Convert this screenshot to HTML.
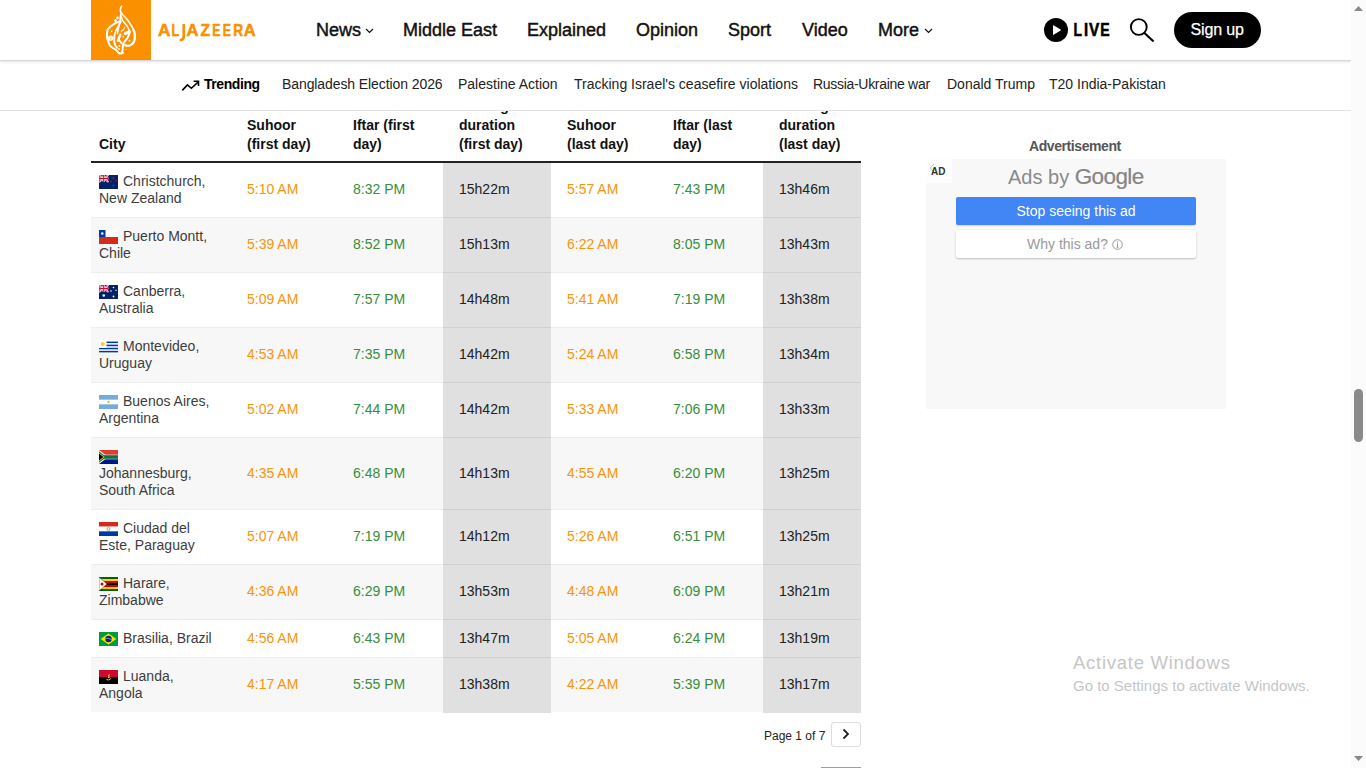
<!DOCTYPE html>
<html><head><meta charset="utf-8">
<style>
*{margin:0;padding:0;box-sizing:border-box}
html,body{width:1366px;height:768px;overflow:hidden;background:#fff;font-family:"Liberation Sans",sans-serif;color:#000}
.a{position:absolute;white-space:nowrap}
#hdr{position:absolute;left:0;top:0;width:1351px;height:61px;background:#fff;border-bottom:1px solid #d6d6d6;box-shadow:0 1px 3px rgba(0,0,0,.12);z-index:20}
#logo{position:absolute;left:91px;top:0;width:60px;height:60px;background:#fa9000}
.brand{left:158px;top:20px;font-size:16.5px;line-height:20px;font-weight:bold;color:#fa9000;letter-spacing:0.2px}
.nav{top:19px;font-size:18px;line-height:22px;font-weight:normal;color:#111;-webkit-text-stroke:0.45px #111}
#trend{position:absolute;left:0;top:61px;width:1351px;height:50px;background:#fff;border-bottom:1px solid #e3e3e3;z-index:10}
.tr{top:15px;font-size:14px;line-height:17px;color:#222}
#sb{position:absolute;left:1351px;top:0;width:15px;height:768px;background:#fbfbfb;z-index:30}
.th{font-size:14px;line-height:19px;font-weight:bold;color:#111}
.td{font-size:14px;line-height:17px;color:#222}
.city{color:#3d3d3d}
.or{color:#f9940b}
.gr{color:#388e3c}
.du{color:#222}
</style></head><body>
<div id="hdr">
  <div id="logo">
    <svg width="60" height="60" viewBox="0 0 60 60" style="position:absolute;left:0;top:0">
      <g fill="none" stroke="#fff" stroke-linecap="round" stroke-linejoin="round">
        <path d="M30.6 6.4 C29 8 28.9 11.5 30.3 13.1 C32 15 35 18 36.7 20.3 C39 23.5 41.5 27 42.5 30" stroke-width="1.62"/>
        <path d="M42.5 30 C44 33 44.3 37 43.3 40.8 C42.3 43.5 39.5 45.6 36.7 45.9 C35.5 46 34.5 45.6 34.1 45.1" stroke-width="2.34"/>
        <path d="M29.6 14.5 C30.3 17 31 19 31.3 19.9 C32.5 22 34 23.5 34.7 24.3 C36 26 37 27.5 37.4 28.4 C38.2 30 38.5 31.5 38.5 32.7" stroke-width="1.43"/>
        <path d="M38.5 32.7 C38 35 37 37 36.3 38.2 C35 40 34 41 33.4 41.9 C32.5 43 32 44 32 44.4 C31.8 46 31.7 48 31.6 49.9 C31.4 51.5 31 52.5 30.5 53.2" stroke-width="1.95"/>
        <path d="M27.9 21.6 C25.5 22.5 24 23.5 22.5 24.3 C20 25.8 18.5 27.2 17.4 28.7 C16.6 29.8 16.2 30.8 16.3 31.6 C15.9 33 15.8 34 15.9 35.3 C16 38 16.5 40 17.4 41.9 C18 43.5 18.5 45 19.2 45.9 C20.2 47 21.3 47.8 22.5 48.4 C23.5 48.9 24.3 49.3 25 49.9 C26 50.8 26.8 51.8 27.6 52.8 C28.5 53.4 29.3 53.6 30.1 53.5 C31 53.4 31.5 53.2 32 52.8" stroke-width="2.08"/>
        <path d="M29.6 15.2 C29.4 19 28.8 23 28 26 C27 30 26.6 32 26.5 33.5" stroke-width="1.56"/>
        <path d="M29.9 21 C28.5 25 25.5 29 24.4 32 C23.5 34 23.2 36.5 23.2 39 C23.2 41 23.5 43 23.9 44.4 C24.5 46 25.3 47 26.1 47.7" stroke-width="1.82"/>
        <path d="M29.4 34.6 C28.5 37 27.5 39 26.9 40.8" stroke-width="2.34"/>
        <path d="M28.3 40.4 L30.5 43.3" stroke-width="1.82"/>
        <path d="M34.1 33.6 C35.5 33 37 32.3 38.5 31.6" stroke-width="2.86"/>
        <path d="M20.4 31.8 L21 30.8 M30.3 31.4 L33.2 29.2 M33 28.2 L33.8 27.2" stroke-width="1.04"/>
      </g>
      <circle cx="19.6" cy="38.2" r="1.6" fill="none" stroke="#fff" stroke-width="2.08"/>
      <g fill="#fff"><circle cx="26.5" cy="17.9" r="1.3"/><circle cx="24.5" cy="20.6" r="1.3"/><circle cx="32.3" cy="36.7" r=".9"/><circle cx="38.5" cy="40.8" r="1"/><circle cx="28.3" cy="45.9" r="1"/><circle cx="28" cy="49.1" r="1"/><circle cx="35.2" cy="49.5" r=".6"/></g>
    </svg>
  </div>
  <svg class="a" style="left:150px;top:15px" width="110" height="30" viewBox="150 15 110 30"><g fill="#fa9000" stroke="#fa9000" stroke-width="0.5" font-family="Liberation Sans" font-weight="bold" font-size="16.4"><text x="157.9" y="35.7" textLength="12.4" lengthAdjust="spacingAndGlyphs">A</text><text x="171.4" y="35.7" textLength="7.7" lengthAdjust="spacingAndGlyphs">L</text><text x="186.5" y="35.7" textLength="12.0" lengthAdjust="spacingAndGlyphs">A</text><text x="200.4" y="35.7" textLength="9.5" lengthAdjust="spacingAndGlyphs">Z</text><text x="212.2" y="35.7" textLength="8.2" lengthAdjust="spacingAndGlyphs">E</text><text x="222.7" y="35.7" textLength="8.2" lengthAdjust="spacingAndGlyphs">E</text><text x="233.2" y="35.7" textLength="9.9" lengthAdjust="spacingAndGlyphs">R</text><text x="243.8" y="35.7" textLength="11.9" lengthAdjust="spacingAndGlyphs">A</text><path d="M183.7 23.9 V36.8 Q183.7 40.1 179.8 40.1" fill="none" stroke-width="2.6"/></g></svg>
  <div class="a nav" style="left:316px">News</div>
  <svg class="a" style="left:365px;top:28px" width="9" height="6" viewBox="0 0 9 6"><path d="M1 1L4.5 4.5L8 1" stroke="#111" stroke-width="1.2" fill="none"/></svg>
  <div class="a nav" style="left:403px">Middle East</div>
  <div class="a nav" style="left:527px">Explained</div>
  <div class="a nav" style="left:636px">Opinion</div>
  <div class="a nav" style="left:728px">Sport</div>
  <div class="a nav" style="left:802px">Video</div>
  <div class="a nav" style="left:878px">More</div>
  <svg class="a" style="left:924px;top:28px" width="9" height="6" viewBox="0 0 9 6"><path d="M1 1L4.5 4.5L8 1" stroke="#111" stroke-width="1.2" fill="none"/></svg>
  <svg class="a" style="left:1044px;top:18px" width="24" height="24" viewBox="0 0 24 24"><circle cx="12" cy="12" r="12" fill="#000"/><path d="M9.5 7.2 Q9 7 9 7.8 V16.2 Q9 17 9.6 16.7 L16.6 12.6 Q17.2 12 16.6 11.4Z" fill="#fff"/></svg>
  <svg class="a" style="left:1070px;top:15px" width="45" height="30" viewBox="1070 15 45 30"><g fill="#000" stroke="#000" stroke-width="0.55" font-family="Liberation Sans" font-weight="bold" font-size="17.5"><text x="1073.5" y="35.8" textLength="8.5" lengthAdjust="spacingAndGlyphs">L</text><text x="1084.1" y="35.8" textLength="4.1" lengthAdjust="spacingAndGlyphs">I</text><text x="1088.9" y="35.8" textLength="10.3" lengthAdjust="spacingAndGlyphs">V</text><text x="1100.3" y="35.8" textLength="9.4" lengthAdjust="spacingAndGlyphs">E</text></g></svg>
  <svg class="a" style="left:1128px;top:16px" width="28" height="28" viewBox="0 0 28 28"><circle cx="10.8" cy="11" r="7.9" stroke="#000" stroke-width="1.9" fill="none"/><path d="M16.4 16.9L25.6 25.4" stroke="#000" stroke-width="2.1" stroke-linecap="butt"/></svg>
  <div class="a" style="left:1174px;top:12px;width:87px;height:36px;border-radius:18px;background:#000"></div>
  <div class="a" style="left:1190.5px;top:20px;font-size:16px;line-height:20px;color:#fff;-webkit-text-stroke:0.25px #fff;letter-spacing:-0.15px">Sign up</div>
</div>
<div id="trend">
  <svg class="a" style="left:181px;top:19px" width="20" height="13" viewBox="0 0 20 13"><path d="M1.3 10.4L6.4 4.9L10.4 8.3L17 2.2" stroke="#000" stroke-width="1.6" fill="none" stroke-linejoin="miter"/><path d="M12.6 1.3H17.5V6" stroke="#000" stroke-width="1.6" fill="none"/></svg>
  <div class="a tr" style="left:204px;font-weight:bold;color:#000;letter-spacing:-0.43px">Trending</div>
  <div class="a tr" style="left:282px;letter-spacing:-0.09px">Bangladesh Election 2026</div>
  <div class="a tr" style="left:458px">Palestine Action</div>
  <div class="a tr" style="left:574px">Tracking Israel's ceasefire violations</div>
  <div class="a tr" style="left:813px;letter-spacing:-0.3px">Russia-Ukraine war</div>
  <div class="a tr" style="left:947px">Donald Trump</div>
  <div class="a tr" style="left:1049px">T20 India-Pakistan</div>
</div>
<div id="tbl">
<div class="a th" style="left:99px;top:135.45px">City</div>
<div class="a th" style="left:247px;top:116.45px">Suhoor</div>
<div class="a th" style="left:247px;top:135.45px">(first day)</div>
<div class="a th" style="left:353px;top:116.45px">Iftar (first</div>
<div class="a th" style="left:353px;top:135.45px">day)</div>
<div class="a th" style="left:459px;top:97.45px">Fasting</div>
<div class="a th" style="left:459px;top:116.45px">duration</div>
<div class="a th" style="left:459px;top:135.45px">(first day)</div>
<div class="a th" style="left:567px;top:116.45px">Suhoor</div>
<div class="a th" style="left:567px;top:135.45px">(last day)</div>
<div class="a th" style="left:673px;top:116.45px">Iftar (last</div>
<div class="a th" style="left:673px;top:135.45px">day)</div>
<div class="a th" style="left:779px;top:97.45px">Fasting</div>
<div class="a th" style="left:779px;top:116.45px">duration</div>
<div class="a th" style="left:779px;top:135.45px">(last day)</div>
<div class="a" style="left:91px;top:161px;width:770px;height:2px;background:#222"></div>
<div class="a" style="left:91px;top:163px;width:770px;height:54px;background:#fff"></div>
<div class="a" style="left:443px;top:163px;width:108px;height:55px;background:#e0e0e0"></div>
<div class="a" style="left:763px;top:163px;width:98px;height:55px;background:#e0e0e0"></div>
<div class="a" style="left:91px;top:217px;width:770px;height:1px;background:rgba(0,0,0,.07)"></div>
<svg class="a" style="left:99px;top:175px" width="19" height="14" viewBox="0 0 19 14"><rect width="19" height="14" fill="#012169"/><g><rect x="0" y="0" width="9.5" height="7" fill="#012169"/><path d="M0 0L9.5 7M9.5 0L0 7" stroke="#fff" stroke-width="1.6"/><path d="M0 0L9.5 7M9.5 0L0 7" stroke="#c8102e" stroke-width=".6"/><path d="M4.75 0V7M0 3.5H9.5" stroke="#fff" stroke-width="2.2"/><path d="M4.75 0V7M0 3.5H9.5" stroke="#c8102e" stroke-width="1.2"/></g><g fill="#c8102e"><circle cx="14.5" cy="3.2" r=".9"/><circle cx="12" cy="6.2" r=".8"/><circle cx="17" cy="5.6" r=".8"/><circle cx="14.5" cy="10.5" r=".9"/></g></svg>
<div class="a td city" style="left:123px;top:173.00px">Christchurch,</div>
<div class="a td city" style="left:99px;top:190.00px">New Zealand</div>
<div class="a td or" style="left:247px;top:180.50px">5:10 AM</div>
<div class="a td gr" style="left:353px;top:180.50px">8:32 PM</div>
<div class="a td du" style="left:459px;top:180.50px">15h22m</div>
<div class="a td or" style="left:567px;top:180.50px">5:57 AM</div>
<div class="a td gr" style="left:673px;top:180.50px">7:43 PM</div>
<div class="a td du" style="left:779px;top:180.50px">13h46m</div>
<div class="a" style="left:91px;top:218px;width:770px;height:54px;background:#f7f7f7"></div>
<div class="a" style="left:443px;top:218px;width:108px;height:55px;background:#e0e0e0"></div>
<div class="a" style="left:763px;top:218px;width:98px;height:55px;background:#e0e0e0"></div>
<div class="a" style="left:91px;top:272px;width:770px;height:1px;background:rgba(0,0,0,.07)"></div>
<svg class="a" style="left:99px;top:230px" width="19" height="14" viewBox="0 0 19 14"><rect width="19" height="7" fill="#fff"/><rect y="7" width="19" height="7" fill="#d52b1e"/><rect width="6.5" height="7" fill="#0039a6"/><circle cx="3.25" cy="3.5" r="1.3" fill="#fff"/></svg>
<div class="a td city" style="left:123px;top:228.00px">Puerto Montt,</div>
<div class="a td city" style="left:99px;top:245.00px">Chile</div>
<div class="a td or" style="left:247px;top:235.50px">5:39 AM</div>
<div class="a td gr" style="left:353px;top:235.50px">8:52 PM</div>
<div class="a td du" style="left:459px;top:235.50px">15h13m</div>
<div class="a td or" style="left:567px;top:235.50px">6:22 AM</div>
<div class="a td gr" style="left:673px;top:235.50px">8:05 PM</div>
<div class="a td du" style="left:779px;top:235.50px">13h43m</div>
<div class="a" style="left:91px;top:273px;width:770px;height:54px;background:#fff"></div>
<div class="a" style="left:443px;top:273px;width:108px;height:55px;background:#e0e0e0"></div>
<div class="a" style="left:763px;top:273px;width:98px;height:55px;background:#e0e0e0"></div>
<div class="a" style="left:91px;top:327px;width:770px;height:1px;background:rgba(0,0,0,.07)"></div>
<svg class="a" style="left:99px;top:285px" width="19" height="14" viewBox="0 0 19 14"><rect width="19" height="14" fill="#012169"/><path d="M0 0L9.5 7M9.5 0L0 7" stroke="#fff" stroke-width="1.6"/><path d="M0 0L9.5 7M9.5 0L0 7" stroke="#e4002b" stroke-width=".6"/><path d="M4.75 0V7M0 3.5H9.5" stroke="#fff" stroke-width="2.2"/><path d="M4.75 0V7M0 3.5H9.5" stroke="#e4002b" stroke-width="1.2"/><rect x="0" y="7" width="0" height="0"/><g fill="#fff"><circle cx="4.75" cy="10.5" r="1.3"/><circle cx="14.5" cy="2.5" r=".8"/><circle cx="12" cy="6" r=".8"/><circle cx="17" cy="5.2" r=".7"/><circle cx="14.5" cy="11.5" r=".9"/></g></svg>
<div class="a td city" style="left:123px;top:283.00px">Canberra,</div>
<div class="a td city" style="left:99px;top:300.00px">Australia</div>
<div class="a td or" style="left:247px;top:290.50px">5:09 AM</div>
<div class="a td gr" style="left:353px;top:290.50px">7:57 PM</div>
<div class="a td du" style="left:459px;top:290.50px">14h48m</div>
<div class="a td or" style="left:567px;top:290.50px">5:41 AM</div>
<div class="a td gr" style="left:673px;top:290.50px">7:19 PM</div>
<div class="a td du" style="left:779px;top:290.50px">13h38m</div>
<div class="a" style="left:91px;top:328px;width:770px;height:54px;background:#f7f7f7"></div>
<div class="a" style="left:443px;top:328px;width:108px;height:55px;background:#e0e0e0"></div>
<div class="a" style="left:763px;top:328px;width:98px;height:55px;background:#e0e0e0"></div>
<div class="a" style="left:91px;top:382px;width:770px;height:1px;background:rgba(0,0,0,.07)"></div>
<svg class="a" style="left:99px;top:340px" width="19" height="14" viewBox="0 0 19 14"><rect width="19" height="14" fill="#fff"/><rect y="1.55" width="19" height="1.55" fill="#0038a8"/><rect y="4.65" width="19" height="1.55" fill="#0038a8"/><rect y="7.75" width="19" height="1.55" fill="#0038a8"/><rect y="10.85" width="19" height="1.55" fill="#0038a8"/><rect width="7.5" height="7.8" fill="#fff"/><circle cx="3.7" cy="3.9" r="2" fill="#fcd116"/></svg>
<div class="a td city" style="left:123px;top:338.00px">Montevideo,</div>
<div class="a td city" style="left:99px;top:355.00px">Uruguay</div>
<div class="a td or" style="left:247px;top:345.50px">4:53 AM</div>
<div class="a td gr" style="left:353px;top:345.50px">7:35 PM</div>
<div class="a td du" style="left:459px;top:345.50px">14h42m</div>
<div class="a td or" style="left:567px;top:345.50px">5:24 AM</div>
<div class="a td gr" style="left:673px;top:345.50px">6:58 PM</div>
<div class="a td du" style="left:779px;top:345.50px">13h34m</div>
<div class="a" style="left:91px;top:383px;width:770px;height:54px;background:#fff"></div>
<div class="a" style="left:443px;top:383px;width:108px;height:55px;background:#e0e0e0"></div>
<div class="a" style="left:763px;top:383px;width:98px;height:55px;background:#e0e0e0"></div>
<div class="a" style="left:91px;top:437px;width:770px;height:1px;background:rgba(0,0,0,.07)"></div>
<svg class="a" style="left:99px;top:395px" width="19" height="14" viewBox="0 0 19 14"><rect width="19" height="14" fill="#74acdf"/><rect y="4.67" width="19" height="4.67" fill="#fff"/><circle cx="9.5" cy="7" r="1.2" fill="#f6b40e"/></svg>
<div class="a td city" style="left:123px;top:393.00px">Buenos Aires,</div>
<div class="a td city" style="left:99px;top:410.00px">Argentina</div>
<div class="a td or" style="left:247px;top:400.50px">5:02 AM</div>
<div class="a td gr" style="left:353px;top:400.50px">7:44 PM</div>
<div class="a td du" style="left:459px;top:400.50px">14h42m</div>
<div class="a td or" style="left:567px;top:400.50px">5:33 AM</div>
<div class="a td gr" style="left:673px;top:400.50px">7:06 PM</div>
<div class="a td du" style="left:779px;top:400.50px">13h33m</div>
<div class="a" style="left:91px;top:438px;width:770px;height:71px;background:#f7f7f7"></div>
<div class="a" style="left:443px;top:438px;width:108px;height:72px;background:#e0e0e0"></div>
<div class="a" style="left:763px;top:438px;width:98px;height:72px;background:#e0e0e0"></div>
<div class="a" style="left:91px;top:509px;width:770px;height:1px;background:rgba(0,0,0,.07)"></div>
<svg class="a" style="left:99px;top:450px" width="19" height="14" viewBox="0 0 19 14"><rect width="19" height="14" fill="#fff"/><rect width="19" height="4.7" fill="#e03c31"/><rect y="9.3" width="19" height="4.7" fill="#001489"/><path d="M0 0L9 7L0 14Z" fill="#fff"/><rect y="5.2" width="19" height="3.6" fill="#007749"/><path d="M0 1.2L7.4 7L0 12.8Z" fill="#007749"/><path d="M0 2.6L5.6 7L0 11.4Z" fill="#ffb81c"/><path d="M0 3.6L4.3 7L0 10.4Z" fill="#000"/></svg>
<div class="a td city" style="left:99px;top:465.00px">Johannesburg,</div>
<div class="a td city" style="left:99px;top:482.00px">South Africa</div>
<div class="a td or" style="left:247px;top:464.50px">4:35 AM</div>
<div class="a td gr" style="left:353px;top:464.50px">6:48 PM</div>
<div class="a td du" style="left:459px;top:464.50px">14h13m</div>
<div class="a td or" style="left:567px;top:464.50px">4:55 AM</div>
<div class="a td gr" style="left:673px;top:464.50px">6:20 PM</div>
<div class="a td du" style="left:779px;top:464.50px">13h25m</div>
<div class="a" style="left:91px;top:510px;width:770px;height:54px;background:#fff"></div>
<div class="a" style="left:443px;top:510px;width:108px;height:55px;background:#e0e0e0"></div>
<div class="a" style="left:763px;top:510px;width:98px;height:55px;background:#e0e0e0"></div>
<div class="a" style="left:91px;top:564px;width:770px;height:1px;background:rgba(0,0,0,.07)"></div>
<svg class="a" style="left:99px;top:522px" width="19" height="14" viewBox="0 0 19 14"><rect width="19" height="4.67" fill="#d52b1e"/><rect y="4.67" width="19" height="4.67" fill="#fff"/><rect y="9.33" width="19" height="4.67" fill="#0038a8"/><circle cx="9.5" cy="7" r="1.5" fill="none" stroke="#5a8a3a" stroke-width=".6"/></svg>
<div class="a td city" style="left:123px;top:520.00px">Ciudad del</div>
<div class="a td city" style="left:99px;top:537.00px">Este, Paraguay</div>
<div class="a td or" style="left:247px;top:527.50px">5:07 AM</div>
<div class="a td gr" style="left:353px;top:527.50px">7:19 PM</div>
<div class="a td du" style="left:459px;top:527.50px">14h12m</div>
<div class="a td or" style="left:567px;top:527.50px">5:26 AM</div>
<div class="a td gr" style="left:673px;top:527.50px">6:51 PM</div>
<div class="a td du" style="left:779px;top:527.50px">13h25m</div>
<div class="a" style="left:91px;top:565px;width:770px;height:54px;background:#f7f7f7"></div>
<div class="a" style="left:443px;top:565px;width:108px;height:55px;background:#e0e0e0"></div>
<div class="a" style="left:763px;top:565px;width:98px;height:55px;background:#e0e0e0"></div>
<div class="a" style="left:91px;top:619px;width:770px;height:1px;background:rgba(0,0,0,.07)"></div>
<svg class="a" style="left:99px;top:577px" width="19" height="14" viewBox="0 0 19 14"><rect y="0.00" width="19" height="2" fill="#006400"/><rect y="2.00" width="19" height="2" fill="#ffd200"/><rect y="4.00" width="19" height="2" fill="#d40000"/><rect y="6.00" width="19" height="2" fill="#000"/><rect y="8.00" width="19" height="2" fill="#d40000"/><rect y="10.00" width="19" height="2" fill="#ffd200"/><rect y="12.00" width="19" height="2" fill="#006400"/><path d="M0 0L8 7L0 14Z" fill="#fff" stroke="#000" stroke-width=".4"/><circle cx="3" cy="7" r="1.5" fill="#d40000"/></svg>
<div class="a td city" style="left:123px;top:575.00px">Harare,</div>
<div class="a td city" style="left:99px;top:592.00px">Zimbabwe</div>
<div class="a td or" style="left:247px;top:582.50px">4:36 AM</div>
<div class="a td gr" style="left:353px;top:582.50px">6:29 PM</div>
<div class="a td du" style="left:459px;top:582.50px">13h53m</div>
<div class="a td or" style="left:567px;top:582.50px">4:48 AM</div>
<div class="a td gr" style="left:673px;top:582.50px">6:09 PM</div>
<div class="a td du" style="left:779px;top:582.50px">13h21m</div>
<div class="a" style="left:91px;top:620px;width:770px;height:37px;background:#fff"></div>
<div class="a" style="left:443px;top:620px;width:108px;height:38px;background:#e0e0e0"></div>
<div class="a" style="left:763px;top:620px;width:98px;height:38px;background:#e0e0e0"></div>
<div class="a" style="left:91px;top:657px;width:770px;height:1px;background:rgba(0,0,0,.07)"></div>
<svg class="a" style="left:99px;top:632px" width="19" height="14" viewBox="0 0 19 14"><rect width="19" height="14" fill="#009c3b"/><path d="M9.5 1.6L17.3 7L9.5 12.4L1.7 7Z" fill="#ffdf00"/><circle cx="9.5" cy="7" r="3.2" fill="#002776"/><path d="M6.5 6.3Q9.5 5.8 12.5 7.6" stroke="#fff" stroke-width=".5" fill="none"/></svg>
<div class="a td city" style="left:123px;top:630.00px">Brasilia, Brazil</div>
<div class="a td or" style="left:247px;top:629.50px">4:56 AM</div>
<div class="a td gr" style="left:353px;top:629.50px">6:43 PM</div>
<div class="a td du" style="left:459px;top:629.50px">13h47m</div>
<div class="a td or" style="left:567px;top:629.50px">5:05 AM</div>
<div class="a td gr" style="left:673px;top:629.50px">6:24 PM</div>
<div class="a td du" style="left:779px;top:629.50px">13h19m</div>
<div class="a" style="left:91px;top:658px;width:770px;height:54px;background:#f7f7f7"></div>
<div class="a" style="left:443px;top:658px;width:108px;height:55px;background:#e0e0e0"></div>
<div class="a" style="left:763px;top:658px;width:98px;height:55px;background:#e0e0e0"></div>
<svg class="a" style="left:99px;top:670px" width="19" height="14" viewBox="0 0 19 14"><rect width="19" height="7" fill="#cc092f"/><rect y="7" width="19" height="7" fill="#000"/><path d="M7.5 9.5Q9.5 11 12 8.5M9 5.5L11 4.8" stroke="#ffcb00" stroke-width="1" fill="none"/><circle cx="9.8" cy="7.2" r="1" fill="#ffcb00"/></svg>
<div class="a td city" style="left:123px;top:668.00px">Luanda,</div>
<div class="a td city" style="left:99px;top:685.00px">Angola</div>
<div class="a td or" style="left:247px;top:675.50px">4:17 AM</div>
<div class="a td gr" style="left:353px;top:675.50px">5:55 PM</div>
<div class="a td du" style="left:459px;top:675.50px">13h38m</div>
<div class="a td or" style="left:567px;top:675.50px">4:22 AM</div>
<div class="a td gr" style="left:673px;top:675.50px">5:39 PM</div>
<div class="a td du" style="left:779px;top:675.50px">13h17m</div>
</div>
<div class="a" style="left:764px;top:729px;font-size:12px;line-height:15px;color:#222">Page 1 of 7</div>
<div class="a" style="left:831px;top:722px;width:30px;height:25px;border:1px solid #dcdcdc;border-radius:3px;background:#fff"></div>
<svg class="a" style="left:841px;top:728px" width="10" height="12" viewBox="0 0 10 12"><path d="M2.5 1.5L7 6L2.5 10.5" stroke="#222" stroke-width="1.8" fill="none"/></svg>
<div class="a" style="left:821px;top:767px;width:40px;height:1px;background:#fa9000"></div>

<!-- ad -->
<div class="a" style="left:1029px;top:138px;font-size:14px;line-height:17px;font-weight:bold;color:#555;letter-spacing:-0.42px">Advertisement</div>
<div class="a" style="left:926px;top:159px;width:300px;height:250px;background:#f8f8f8"></div>
<div class="a" style="left:926px;top:159px;width:26px;height:24px;background:#fdfdfd;border-bottom-right-radius:3px"></div>
<svg class="a" style="left:929px;top:163px" width="6" height="10" viewBox="0 0 6 10"><path d="M5 1L1.2 5L5 9" stroke="#bbb" stroke-width="1" fill="none"/></svg>
<div class="a" style="left:931px;top:166px;font-size:10px;line-height:12px;font-weight:bold;color:#333">AD</div>
<div class="a" style="left:1008px;top:165px;font-size:20px;line-height:23px;color:#8a8a8a">Ads by <span style="font-size:22.5px;letter-spacing:-0.6px;color:#858585;-webkit-text-stroke:0.2px #858585">Google</span></div>
<div class="a" style="left:956px;top:197px;width:240px;height:28px;background:#4285f4;border-radius:2px;box-shadow:0 1px 1px rgba(0,0,0,.15)"></div>
<div class="a" style="left:956px;top:203px;width:240px;text-align:center;font-size:14px;line-height:17px;color:#fff">Stop seeing this ad</div>
<div class="a" style="left:956px;top:230px;width:240px;height:28px;background:#fff;border-radius:2px;box-shadow:0 1px 2px rgba(0,0,0,.25)"></div>
<div class="a" style="left:1027px;top:236px;font-size:14px;line-height:17px;color:#999">Why this ad?</div>
<svg class="a" style="left:1112px;top:239px" width="11" height="11" viewBox="0 0 11 11"><circle cx="5.5" cy="5.5" r="4.8" stroke="#999" stroke-width="1" fill="none"/><path d="M5.5 4.5V8.3M4.6 8.3H6.4" stroke="#999" stroke-width="1"/><circle cx="5.5" cy="3" r=".7" fill="#999"/></svg>

<div class="a" style="left:1073px;top:652px;font-size:18.5px;line-height:22px;color:#c6c6c6;letter-spacing:0.73px">Activate Windows</div>
<div class="a" style="left:1073px;top:677px;font-size:15px;line-height:17px;color:#c6c6c6">Go to Settings to activate Windows.</div>

<div id="sb">
  <svg class="a" style="left:3px;top:6px" width="9" height="5" viewBox="0 0 9 5"><path d="M0 5L4.5 0L9 5Z" fill="#888"/></svg>
  <div class="a" style="left:3px;top:389px;width:9px;height:53px;border-radius:4.5px;background:#8a8a8a"></div>
  <svg class="a" style="left:3px;top:756px" width="9" height="5" viewBox="0 0 9 5"><path d="M0 0L4.5 5L9 0Z" fill="#888"/></svg>
</div>
</body></html>
